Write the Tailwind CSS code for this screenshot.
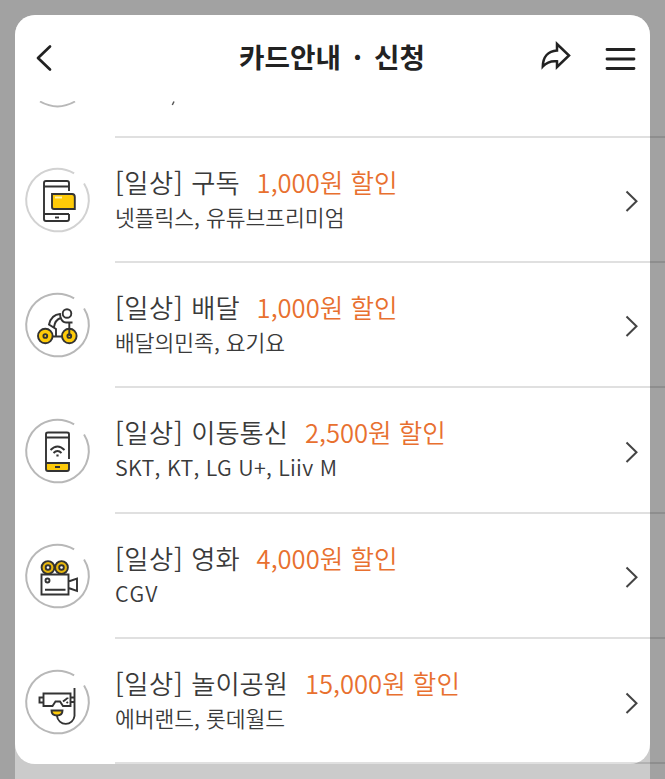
<!DOCTYPE html>
<html lang="ko">
<head>
    <meta charset="UTF-8">
    <meta name="viewport" content="width=device-width, initial-scale=1.0">
    <title>카드안내 · 신청</title>
    <script src="https://cdn.jsdelivr.net/npm/@tailwindcss/browser@4"></script>
</head>
<body class="h-[779px] overflow-hidden bg-[#a2a2a2] px-[15px] pt-[15px] font-['Noto_Sans_CJK_KR',sans-serif]">
    <div class="h-[764px] rounded-t-[20px] bg-[#cbcbcb]">
        <main class="h-[749px] rounded-[20px] bg-white">
            <!-- Header -->
            <header class="flex h-[86px] items-center pl-[19px] pr-[14px] text-[#222]">
                <button aria-label="뒤로">
                    <svg class="block" width="20" height="30" viewBox="0 0 20 30" fill="none" stroke="currentColor" stroke-width="2.7" stroke-linecap="round" stroke-linejoin="round"><path d="M16 3.500 4 15 16 26.500"/></svg>
                </button>
                <h1 class="-mt-[5px] ml-[185px] flex w-[200px] whitespace-nowrap text-[27.7px] font-bold leading-[40px]">
                    <span>카드안내</span>
                    <span class="ml-[12px]">·</span>
                    <span class="ml-[12px]">신청</span>
                </h1>
                <button class="-mt-[6px] ml-auto" aria-label="공유">
                    <svg class="block" width="34" height="34" viewBox="0 0 34 34" fill="none" stroke="currentColor" stroke-width="2.5" stroke-linejoin="miter"><path d="M18 6 30 17.500 18 29V23.300C11 22.500 7 25 3.800 28.500 4 19 9 13 18 12.500Z"/></svg>
                </button>
                <button class="ml-[31px] mt-[1px]" aria-label="메뉴">
                    <svg class="block" width="32" height="30" viewBox="0 0 32 30" fill="none" stroke="currentColor" stroke-width="2.8" stroke-linecap="round"><path d="M3 5.500H30M3 15H30M3 24.500H30"/></svg>
                </button>
            </header>

            <!-- Tail of the row scrolled under the header -->
            <div class="flex h-[34.500px] pl-[10px]">
                <svg class="block" width="66" height="8" viewBox="0 0 66 8" fill="none" stroke="#b8b8b8" stroke-width="2"><path d="M15 .5Q32.500 10.500 50 .5"/></svg>
                <svg class="ml-[79px] block" width="8" height="6" viewBox="0 0 8 6" fill="none" stroke="#555" stroke-width="1.500"><path d="M4 .5 2.300 4"/></svg>
            </div>
            <div class="-mr-[15px] ml-[100px] h-[2px] bg-black/12"></div>

            <ul id="benefitList"></ul>
        </main>
    </div>

    <script>
        const benefits = [
            {
                name: '구독', price: '1,000원 할인', desc: '넷플릭스, 유튜브프리미엄', ring: '#d2d2d2', tracking: 'tracking-normal',
                icon: `
                    <path d="M47 27V19Q47 17 45 17H24Q22 17 22 19V55Q22 57 24 57H45Q47 57 47 55V50M22 22.500H47M22 50H47"/>
                    <path d="M33 53.500H37"/>
                    <path fill="#ffcb08" d="M30 30H50Q52.800 30 52.800 33V45H32Q30 45 30 43Z"/>
                    <path stroke="#fff3b0" d="M33 33.500H40"/>`
            },
            {
                name: '배달', price: '1,000원 할인', desc: '배달의민족, 요기요', ring: '#b8b8b8', tracking: 'tracking-normal',
                icon: `
                    <g fill="#ffcb08"><circle cx="23.300" cy="47" r="7.300"/><circle cx="47.300" cy="47" r="7.300"/></g>
                    <circle cx="23.300" cy="47" r="1.900"/><circle cx="47.300" cy="47" r="1.900"/>
                    <circle cx="45" cy="24.500" r="4.300"/>
                    <path d="M30.500 47.500H40M34 47.500V40L27 35.500Q29.500 25.500 38 25L38.500 28Q40 33.500 44 33.500H50.500M38.500 29Q33 31 32 38M47.300 33.500V47"/>`
            },
            {
                name: '이동통신', price: '2,500원 할인', desc: 'SKT, KT, LG U+, Liiv M', ring: '#b8b8b8', tracking: 'tracking-[0.25px]',
                icon: `
                    <path fill="#ffcb08" stroke="none" d="M24 48H47V54Q47 56 45 56H26Q24 56 24 54Z"/>
                    <path d="M47 44V19Q47 17.500 45 17.500H26Q24 17.500 24 19V54Q24 56 26 56H45Q47 56 47 54V48H24M24 22.500H47M33 52H38"/>
                    <path d="M28.500 35Q35.500 28 42.500 35M31.500 38Q35.500 34 39.500 38"/>
                    <path stroke-width="2.200" d="M35.500 39.500V41.500"/>`
            },
            {
                name: '영화', price: '4,000원 할인', desc: 'CGV', ring: '#b8b8b8', tracking: 'tracking-[1.5px]',
                icon: `
                    <g fill="#e8b80e"><circle cx="26" cy="27.500" r="6.400"/><circle cx="39.500" cy="27.500" r="6.400"/></g>
                    <g fill="#fff"><circle cx="26" cy="27.500" r="2.300"/><circle cx="39.500" cy="27.500" r="2.300"/></g>
                    <path d="M19.500 34.500H46.500V54.500H19.500ZM46.500 41.500 55 38.500V51L46.500 48M23 49.800H43.500"/>
                    <circle cx="25.500" cy="40.500" r="2"/>`
            },
            {
                name: '놀이공원', price: '15,000원 할인', desc: '에버랜드, 롯데월드', ring: '#b8b8b8', tracking: 'tracking-normal',
                icon: `
                    <path d="M21.500 27.500H48.500V40H41L38 35.500H33.500L30.500 40H21.500ZM21.500 31.500H17.500V36.500H21.500M48.500 31.500H52.500M48.500 36H52.500"/>
                    <path d="M52.500 22V50A8.800 8.800 0 0 1 35 50V45"/>
                    <path fill="#ffcb08" d="M29.500 44.500H40.500Q40.500 49.500 35 49.500 29.500 49.500 29.500 44.500Z"/>
                    <path d="M41 35.500 45 32.500M44.500 37 46 36M45.500 33V31.500"/>`
            }
        ];

        const benefitList = document.getElementById('benefitList');

        benefits.forEach(item => {
            const row = document.createElement('li');
            row.innerHTML = `
                <a class="flex h-[123.400px] pl-[7px] pr-[11px]">
                    <svg class="mt-[26.500px] block h-[72px] w-[72px] shrink-0" viewBox="0 0 72 72" fill="none" stroke="#333" stroke-width="1.9">
                        <circle cx="35.500" cy="36" r="31.300" stroke="${item.ring}" stroke-width="2" pathLength="360" stroke-dasharray="334 26" transform="rotate(-32 35.500 36)"/>
                        ${item.icon}
                    </svg>
                    <div class="ml-[21px] mt-[25px] whitespace-nowrap">
                        <p class="flex text-[26.300px] font-[350] leading-[38px] text-[#3a3a3a]">
                            <span class="tracking-[0.6px]">[일상]</span>
                            <span class="ml-[8px]">${item.name}</span>
                            <span class="ml-[17px] text-[25.600px] text-[#e8702f]">${item.price}</span>
                        </p>
                        <p class="text-[21.500px] font-[350] leading-[32px] text-[#3a3a3a] ${item.tracking}">${item.desc}</p>
                    </div>
                    <svg class="ml-auto mt-[50.500px] block h-[26px] w-[16px]" viewBox="0 0 16 26" fill="none" stroke="#444" stroke-width="2"><path d="M3.500 3.500 13.500 13.200 3.500 23"/></svg>
                </a>
                <div class="-mr-[15px] ml-[100px] h-[2px] bg-black/12"></div>
            `;
            benefitList.appendChild(row);
        });
    </script>
</body>
</html>
